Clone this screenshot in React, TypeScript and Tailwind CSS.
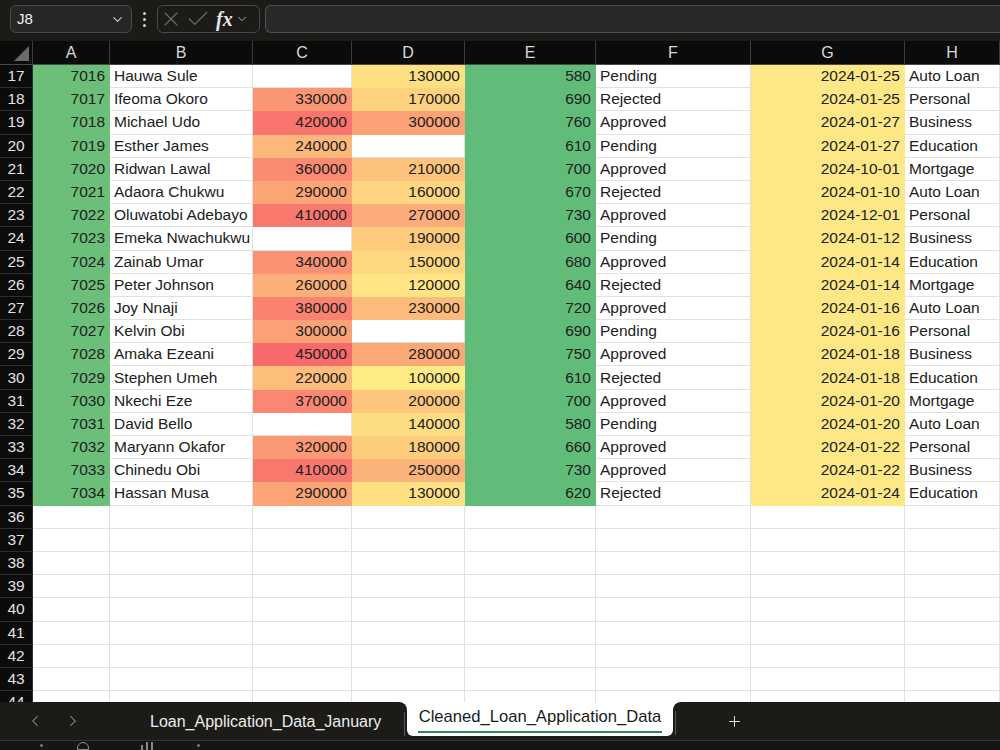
import React from "react";
import { X, Check, ChevronDown, ChevronLeft, ChevronRight, Plus } from "lucide-react";

type Row = [number, number, string, number | null, number | null, number, string, string, string];

const rows: Row[] = [
  [17, 7016, "Hauwa Sule", null, 130000, 580, "Pending", "2024-01-25", "Auto Loan"],
  [18, 7017, "Ifeoma Okoro", 330000, 170000, 690, "Rejected", "2024-01-25", "Personal"],
  [19, 7018, "Michael Udo", 420000, 300000, 760, "Approved", "2024-01-27", "Business"],
  [20, 7019, "Esther James", 240000, null, 610, "Pending", "2024-01-27", "Education"],
  [21, 7020, "Ridwan Lawal", 360000, 210000, 700, "Approved", "2024-10-01", "Mortgage"],
  [22, 7021, "Adaora Chukwu", 290000, 160000, 670, "Rejected", "2024-01-10", "Auto Loan"],
  [23, 7022, "Oluwatobi Adebayo", 410000, 270000, 730, "Approved", "2024-12-01", "Personal"],
  [24, 7023, "Emeka Nwachukwu", null, 190000, 600, "Pending", "2024-01-12", "Business"],
  [25, 7024, "Zainab Umar", 340000, 150000, 680, "Approved", "2024-01-14", "Education"],
  [26, 7025, "Peter Johnson", 260000, 120000, 640, "Rejected", "2024-01-14", "Mortgage"],
  [27, 7026, "Joy Nnaji", 380000, 230000, 720, "Approved", "2024-01-16", "Auto Loan"],
  [28, 7027, "Kelvin Obi", 300000, null, 690, "Pending", "2024-01-16", "Personal"],
  [29, 7028, "Amaka Ezeani", 450000, 280000, 750, "Approved", "2024-01-18", "Business"],
  [30, 7029, "Stephen Umeh", 220000, 100000, 610, "Rejected", "2024-01-18", "Education"],
  [31, 7030, "Nkechi Eze", 370000, 200000, 700, "Approved", "2024-01-20", "Mortgage"],
  [32, 7031, "David Bello", null, 140000, 580, "Pending", "2024-01-20", "Auto Loan"],
  [33, 7032, "Maryann Okafor", 320000, 180000, 660, "Approved", "2024-01-22", "Personal"],
  [34, 7033, "Chinedu Obi", 410000, 250000, 730, "Approved", "2024-01-22", "Business"],
  [35, 7034, "Hassan Musa", 290000, 130000, 620, "Rejected", "2024-01-24", "Education"],
];

const emptyRows = [36, 37, 38, 39, 40, 41, 42, 43, 44];

// yellow -> red colour scale over C:D (min 100000, max 450000)
function scale(v: number) {
  const t = (v - 100000) / 350000;
  const lo = [255, 235, 132];
  const hi = [248, 105, 107];
  const c = lo.map((x, i) => Math.round(x + (hi[i] - x) * t));
  return `rgb(${c[0]},${c[1]},${c[2]})`;
}

const cols = "grid grid-cols-[33px_77px_143px_99px_113px_131px_155px_154px_95px] grid-rows-[100%]";
const cell = "flex items-center px-[4px] border-r border-b overflow-hidden whitespace-nowrap";
const white = "bg-white border-[#e1e1e1]";
const rowHead =
  "flex items-center justify-center bg-[#0b0b0b] text-[#e2e2e2] text-[15.5px] border-b border-r border-[#2f2f2f]";

function ScaleCell({ v }: { v: number | null }) {
  if (v === null) return <div className={`${cell} ${white}`} />;
  const bg = scale(v);
  return (
    <div className={`${cell} justify-end`} style={{ backgroundColor: bg, borderColor: bg }}>
      {v}
    </div>
  );
}

export default function App() {
  return (
    <div className="w-[1000px] h-[750px] overflow-hidden flex flex-col bg-[#1c1b18] font-['Liberation_Sans',Arial,sans-serif]">
      {/* formula bar */}
      <div className="h-[41px] shrink-0 flex items-start pt-[5px] pl-[10px] gap-[6px] bg-[#1c1b18]">
        <div className="w-[122px] h-[28px] rounded-[6px] border border-[#4a4a4a] bg-[#262626] flex items-center justify-between pl-[6px] pr-[6px]">
          <span className="text-[15px] text-[#f0f0f0]">J8</span>
          <ChevronDown size={15} className="text-[#d0d0d0]" strokeWidth={1.8} />
        </div>
        <div className="w-[13px] h-[28px] flex flex-col items-center justify-center gap-[3px]">
          <div className="w-[3px] h-[3px] rounded-full bg-[#cfcfcf]" />
          <div className="w-[3px] h-[3px] rounded-full bg-[#cfcfcf]" />
          <div className="w-[3px] h-[3px] rounded-full bg-[#cfcfcf]" />
        </div>
        <div className="w-[103px] h-[28px] rounded-[6px] border border-[#4a4a4a] flex items-center pl-[1px]">
          <X size={24} className="text-[#6e6e6e]" strokeWidth={1.1} />
          <Check size={26} className="text-[#6e6e6e] ml-[2px]" strokeWidth={1.1} />
          <span className="ml-[5px] text-[20px] italic font-bold text-[#e6e6e6] font-['Liberation_Serif',serif] leading-none">fx</span>
          <ChevronDown size={14} className="text-[#b0b0b0] ml-[2px]" strokeWidth={1.6} />
        </div>
        <div className="flex-1 h-[28px] rounded-l-[6px] border border-r-0 border-[#4f4f4f] bg-[#282828] ml-[-1px]" />
      </div>

      {/* column headers */}
      <div className={`${cols} h-[24px] shrink-0 bg-[#0b0b0b] border-b border-[#4a4a4a]`}>
        <div className="relative border-r border-[#3c3c3c]">
          <div className="absolute left-[14px] top-[5px] w-0 h-0 border-l-[15px] border-l-transparent border-b-[15px] border-b-[#6a6a6a]" />
        </div>
        {["A", "B", "C", "D", "E", "F", "G", "H"].map((l) => (
          <div key={l} className="flex items-center justify-center text-[16px] text-[#d8d8d8] border-r border-[#3c3c3c]">
            {l}
          </div>
        ))}
      </div>

      {/* grid */}
      <div className="flex-1 overflow-hidden bg-white text-[15.5px] leading-[20px] text-[#212121]">
        {rows.map((r) => (
          <div key={r[0]} className={`${cols} h-[23.2px]`}>
            <div className={rowHead}>{r[0]}</div>
            <div className={`${cell} justify-end bg-[#6bbf79] border-[#6bbf79]`}>{r[1]}</div>
            <div className={`${cell} ${white}`}>{r[2]}</div>
            <ScaleCell v={r[3]} />
            <ScaleCell v={r[4]} />
            <div className={`${cell} justify-end bg-[#61bc7a] border-[#61bc7a]`}>{r[5]}</div>
            <div className={`${cell} ${white}`}>{r[6]}</div>
            <div className={`${cell} justify-end bg-[#fee886] border-[#fee886]`}>{r[7]}</div>
            <div className={`${cell} ${white}`}>{r[8]}</div>
          </div>
        ))}
        {emptyRows.map((n) => (
          <div key={n} className={`${cols} h-[23.2px]`}>
            <div className={rowHead}>{n}</div>
            {[0, 1, 2, 3, 4, 5, 6, 7].map((i) => (
              <div key={i} className={`${cell} ${white}`} />
            ))}
          </div>
        ))}
      </div>

      {/* sheet tabs */}
      <div className="h-[38px] shrink-0 flex bg-white">
        <div className="w-[407px] bg-[#1c1b18] rounded-tr-[8px] flex items-center">
          <ChevronLeft size={18} strokeWidth={1.4} className="text-[#9a9a9a] ml-[26px]" />
          <ChevronRight size={18} strokeWidth={1.4} className="text-[#9a9a9a] ml-[20px]" />
          <span className="ml-[68px] text-[16px] text-[#ececec] pt-[1px]">Loan_Application_Data_January</span>
          <div className="ml-auto mr-[2px] w-px h-[24px] bg-[#5a5a5a] mt-[6px]" />
        </div>
        <div className="w-[266px] bg-[#1c1b18] flex flex-col">
          <div className="h-[34px] bg-white rounded-b-[6px] flex flex-col items-center pt-[5px]">
            <span className="text-[16.6px] text-[#1b1b1b] leading-[20px]">Cleaned_Loan_Application_Data</span>
            <div className="mt-[4px] h-[2px] w-[244px] bg-[#2b8c59]" />
          </div>
        </div>
        <div className="flex-1 bg-[#1c1b18] rounded-tl-[8px] flex items-center">
          <div className="ml-[2px] w-px h-[24px] bg-[#5a5a5a] mt-[4px]" />
          <Plus size={17} strokeWidth={1.4} className="text-[#e6e6e6] ml-[50px]" />
        </div>
      </div>

      {/* status bar (cut off) */}
      <div className="h-[10px] shrink-0 bg-[#151515] border-t border-[#353535] overflow-hidden flex items-start text-[#8a8a8a]">
        <div className="ml-[40px] mt-[3px] w-[3px] h-[3px] rounded-full bg-[#777]" />
        <div className="ml-[34px] mt-[1px] w-[12px] h-[8px] rounded-t-full border border-[#8a8a8a]" />
        <div className="ml-[52px] mt-[1px] flex gap-[3px] items-end">
          <div className="w-[2px] h-[5px] bg-[#888]" />
          <div className="w-[2px] h-[8px] bg-[#888]" />
          <div className="w-[2px] h-[8px] bg-[#888]" />
        </div>
        <div className="ml-[44px] mt-[3px] w-[3px] h-[3px] rounded-full bg-[#777]" />
      </div>
    </div>
  );
}
